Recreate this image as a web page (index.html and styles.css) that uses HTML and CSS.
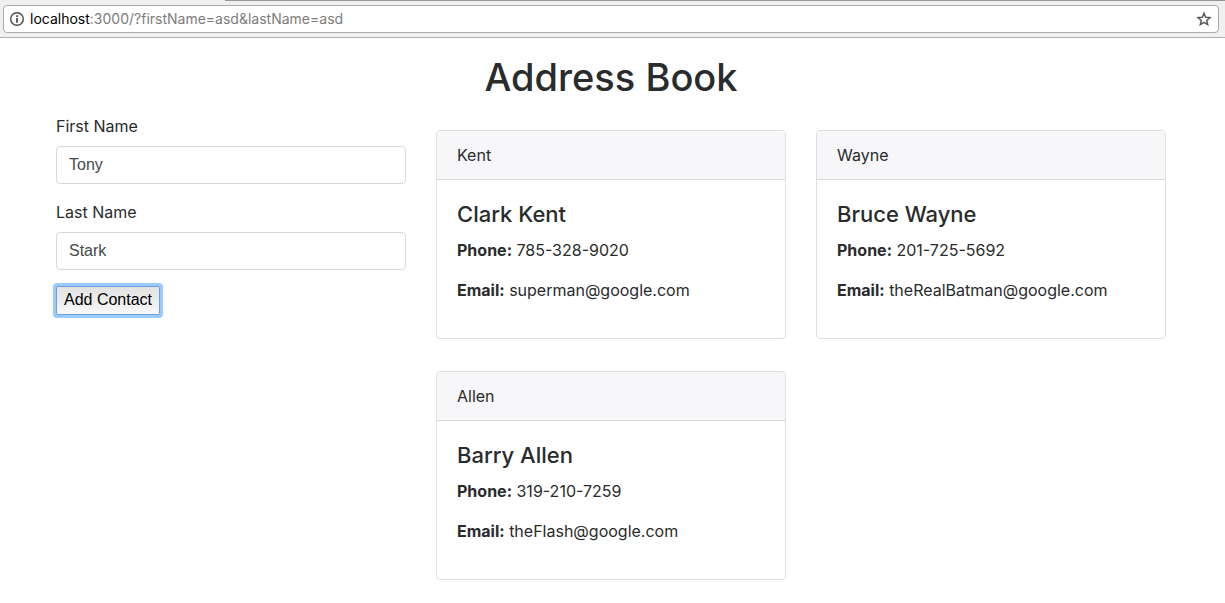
FILE: index.html
```html
<!DOCTYPE html>
<html lang="en">
<head>
<meta charset="utf-8">
<meta name="viewport" content="width=device-width, initial-scale=1">
<title>Address Book</title>
<link rel="stylesheet" href="styles.css">
</head>
<body>
<header class="browser-bar">
  <div class="tab-edge"></div>
  <div class="location">
    <svg class="info-icon" viewBox="0 0 16 16" aria-hidden="true">
      <circle cx="8" cy="8" r="6.3" fill="none" stroke="#4c4c4c" stroke-width="1.4"/>
      <path d="M7.1 4.2h1.8v1.7H7.1zM7.1 7h1.8v4.8H7.1z" fill="#4c4c4c"/>
    </svg>
    <p class="url"><span class="host">localhost</span>:3000/?firstName=asd&amp;lastName=asd</p>
    <button class="bookmark" type="button" aria-label="Bookmark this page">
      <svg class="star-icon" viewBox="0 0 16 16" aria-hidden="true">
        <path d="M8 2.2l1.65 4 4.35.35-3.3 2.85 1 4.2L8 11.4l-3.7 2.2 1-4.2L2 6.55l4.35-.35z" fill="none" stroke="#5a5a5a" stroke-width="1.5"/>
      </svg>
    </button>
  </div>
</header>
<main class="page">
  <h1 class="title">Address Book</h1>
  <div class="columns">
    <form class="contact-form">
      <div class="field">
        <label class="label" for="firstName">First Name</label>
        <input class="input" id="firstName" name="firstName" type="text" value="Tony">
      </div>
      <div class="field">
        <label class="label" for="lastName">Last Name</label>
        <input class="input" id="lastName" name="lastName" type="text" value="Stark">
      </div>
      <button class="submit" type="button">Add Contact</button>
    </form>
    <section class="cards">
      <article class="card">
        <div class="card-header">Kent</div>
        <div class="card-body">
          <h2 class="name">Clark Kent</h2>
          <p class="detail"><strong>Phone:</strong> 785-328-9020</p>
          <p class="detail"><strong>Email:</strong> superman@google.com</p>
        </div>
      </article>
      <article class="card">
        <div class="card-header">Wayne</div>
        <div class="card-body">
          <h2 class="name">Bruce Wayne</h2>
          <p class="detail"><strong>Phone:</strong> 201-725-5692</p>
          <p class="detail"><strong>Email:</strong> theRealBatman@google.com</p>
        </div>
      </article>
      <article class="card">
        <div class="card-header">Allen</div>
        <div class="card-body">
          <h2 class="name">Barry Allen</h2>
          <p class="detail"><strong>Phone:</strong> 319-210-7259</p>
          <p class="detail"><strong>Email:</strong> theFlash@google.com</p>
        </div>
      </article>
    </section>
  </div>
</main>
</body>
</html>
```

FILE: styles.css
```css
* {
  box-sizing: border-box;
}

body {
  margin: 0;
  background: #fff;
  color: #292b2c;
  font-family: Inter, Roboto, sans-serif;
  font-size: 16px;
  line-height: 24px;
}

.browser-bar {
  padding: 0 6px 4px 3px;
  border-bottom: 1px solid #b0b0b0;
  background: #f0f0f0;
}

.tab-edge {
  height: 1px;
  margin: 0 -6px 4px 222px;
  background: #979797;
}

.location {
  display: flex;
  align-items: center;
  gap: 5px;
  height: 28px;
  padding: 0 6px 0 5px;
  border: 1px solid #ababab;
  border-radius: 4px;
  background: #fff;
}

.info-icon,
.star-icon {
  display: block;
  flex: none;
  width: 16px;
  height: 16px;
}

.url {
  flex: 1;
  margin: 0;
  color: #7c7c7c;
  font-size: 14px;
  line-height: 20px;
}

.host {
  color: #000;
}

.bookmark {
  padding: 0;
  border: 0;
  background: none;
}

.page {
  padding: 16px 18px 16px 15px;
}

.title {
  margin: 0 0 14px;
  font-size: 38px;
  font-weight: 500;
  line-height: 46px;
  text-align: center;
}

.columns {
  display: grid;
  grid-template-columns: repeat(3, minmax(0, 1fr));
  column-gap: 30px;
  max-width: 1110px;
  margin: 0 auto;
}

.cards {
  display: grid;
  grid-column: span 2;
  grid-template-columns: repeat(2, minmax(0, 1fr));
  gap: 32px 30px;
  align-content: start;
  padding-top: 16px;
}

.field {
  margin-bottom: 16px;
}

.label {
  display: block;
  margin-bottom: 8px;
}

.input {
  display: block;
  width: 100%;
  height: 38px;
  padding: 8px 12px;
  border: 1px solid #d9d9d9;
  border-radius: 4px;
  background: #fff;
  color: #464a4c;
  font-family: "Liberation Sans", Arial, sans-serif;
  font-size: 16px;
}

.submit {
  height: 29px;
  padding: 0 7px 2px;
  border: 1px solid #6ea2d8;
  outline: 3px solid #9bcaff;
  border-radius: 1px;
  background: linear-gradient(#e2e2e2, #f8f8f8);
  color: #000;
  font-family: "Liberation Sans", Arial, sans-serif;
  font-size: 16px;
}

.card {
  border: 1px solid #dfdfdf;
  border-radius: 4px;
  overflow: hidden;
}

.card-header {
  padding: 12px 20px;
  border-bottom: 1px solid #dadada;
  background: #f7f7f9;
}

.card-body {
  padding: 20px 20px 4px;
}

.name {
  margin: 0 0 10px;
  font-size: 22px;
  font-weight: 500;
  line-height: 28px;
}

.detail {
  margin: 0 0 16px;
}

.detail:last-child {
  margin-bottom: 32px;
}
```
